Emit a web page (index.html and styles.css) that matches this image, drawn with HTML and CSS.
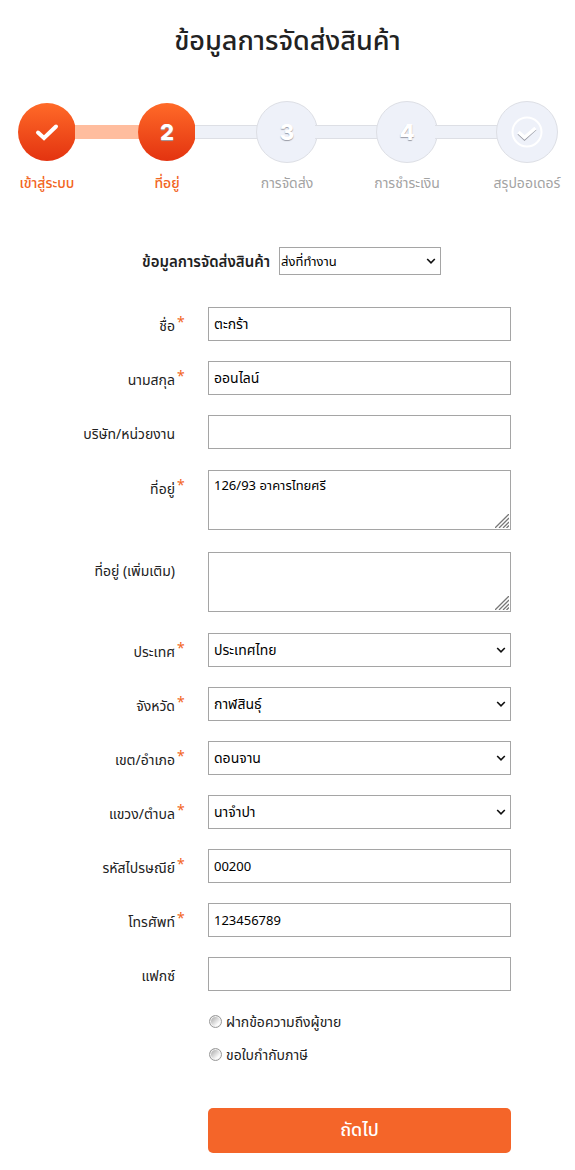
FILE: index.html
```html
<!DOCTYPE html>
<html lang="th">
<head>
<meta charset="utf-8">
<meta name="viewport" content="width=device-width, initial-scale=1">
<title>ข้อมูลการจัดส่งสินค้า</title>
<link rel="stylesheet" href="styles.css">
</head>
<body>
<svg class="sprite" aria-hidden="true">
  <symbol id="chevron" viewBox="0 0 10 8"><path d="M1.200 2 5 5.800 8.800 2" fill="none" stroke="#111" stroke-width="1.600"/></symbol>
  <symbol id="grip" viewBox="0 0 14 14"><path d="M0 14 14 0M4 14 14 4M8 14l6-6M11.500 14l2.500-2.500" fill="none" stroke="#777" stroke-width="1.300"/></symbol>
</svg>
<main class="page">
  <h1 class="title">ข้อมูลการจัดส่งสินค้า</h1>

  <ol class="steps">
    <li class="step step-active">
      <span class="dot"><svg class="tick" viewBox="0 0 24 18" aria-hidden="true"><path d="M3 9.500 9 15 21 3.500" fill="none" stroke="#fff" stroke-width="4" stroke-linecap="round" stroke-linejoin="miter"/></svg></span>
      <span class="step-name">เข้าสู่ระบบ</span>
    </li>
    <li class="bar bar-active" aria-hidden="true"></li>
    <li class="step step-active"><span class="dot">2</span><span class="step-name">ที่อยู่</span></li>
    <li class="bar" aria-hidden="true"></li>
    <li class="step"><span class="dot">3</span><span class="step-name">การจัดส่ง</span></li>
    <li class="bar" aria-hidden="true"></li>
    <li class="step"><span class="dot">4</span><span class="step-name">การชำระเงิน</span></li>
    <li class="bar" aria-hidden="true"></li>
    <li class="step">
      <span class="dot"><svg class="finish" viewBox="0 0 32 32" aria-hidden="true"><circle cx="16" cy="16" r="14.500" fill="none" stroke="#fff" stroke-width="2"/><path d="M7 18 13.500 24 25 13.500" fill="none" stroke="#9a9ca6" stroke-width="1.500"/><path d="M7.500 16 13.500 21.500 24.500 12" fill="none" stroke="#fff" stroke-width="3.500"/></svg></span>
      <span class="step-name">สรุปออเดอร์</span>
    </li>
  </ol>

  <form class="form">
    <div class="preset">
      <label class="preset-label" for="preset">ข้อมูลการจัดส่งสินค้า</label>
      <div class="control preset-control">
        <select class="field field-small" id="preset"><option>ส่งที่ทำงาน</option></select>
        <svg class="chevron"><use href="#chevron"/></svg>
      </div>
    </div>

    <div class="row"><label class="label required" for="first">ชื่อ</label><input class="field" id="first" type="text" value="ตะกร้า"></div>
    <div class="row"><label class="label required" for="last">นามสกุล</label><input class="field" id="last" type="text" value="ออนไลน์"></div>
    <div class="row"><label class="label" for="company">บริษัท/หน่วยงาน</label><input class="field" id="company" type="text"></div>
    <div class="row row-tall"><label class="label required" for="address">ที่อยู่</label>
      <div class="control"><textarea class="field area" id="address">126/93 อาคารไทยศรี</textarea><svg class="grip"><use href="#grip"/></svg></div></div>
    <div class="row row-tall"><label class="label" for="address2">ที่อยู่ (เพิ่มเติม)</label>
      <div class="control"><textarea class="field area" id="address2"></textarea><svg class="grip"><use href="#grip"/></svg></div></div>
    <div class="row"><label class="label required" for="country">ประเทศ</label>
      <div class="control"><select class="field" id="country"><option>ประเทศไทย</option></select><svg class="chevron"><use href="#chevron"/></svg></div></div>
    <div class="row"><label class="label required" for="province">จังหวัด</label>
      <div class="control"><select class="field" id="province"><option>กาฬสินธุ์</option></select><svg class="chevron"><use href="#chevron"/></svg></div></div>
    <div class="row"><label class="label required" for="district">เขต/อำเภอ</label>
      <div class="control"><select class="field" id="district"><option>ดอนจาน</option></select><svg class="chevron"><use href="#chevron"/></svg></div></div>
    <div class="row"><label class="label required" for="subdistrict">แขวง/ตำบล</label>
      <div class="control"><select class="field" id="subdistrict"><option>นาจำปา</option></select><svg class="chevron"><use href="#chevron"/></svg></div></div>
    <div class="row"><label class="label required" for="zip">รหัสไปรษณีย์</label><input class="field field-number" id="zip" type="text" value="00200"></div>
    <div class="row"><label class="label required" for="phone">โทรศัพท์</label><input class="field field-number" id="phone" type="text" value="123456789"></div>
    <div class="row"><label class="label" for="fax">แฟกซ์</label><input class="field field-number" id="fax" type="text"></div>

    <div class="extras">
      <label class="option"><input class="radio" type="radio" name="message">ฝากข้อความถึงผู้ขาย</label>
      <label class="option"><input class="radio" type="radio" name="invoice">ขอใบกำกับภาษี</label>
      <button class="next" type="button">ถัดไป</button>
    </div>
  </form>
</main>
</body>
</html>
```
FILE: styles.css
```css
* { box-sizing: border-box; }
body {
  margin: 0;
  background: #fff;
  color: #222;
  font-family: "Noto Sans Thai", "Noto Sans", sans-serif;
  font-size: 14px;
}
.sprite { display: none; }
.title {
  margin: 0;
  padding-top: 22px;
  font-size: 27px;
  line-height: 40px;
  font-weight: 500;
  text-align: center;
}
.steps {
  display: flex;
  margin: 0;
  padding: 39px 18px 0 17px;
  list-style: none;
}
.step {
  display: flex;
  flex-direction: column;
  align-items: center;
  width: 60px;
  color: #a3a3a3;
}
.dot {
  display: flex;
  align-items: center;
  justify-content: center;
  width: 62px;
  height: 62px;
  flex: none;
  border: 1px solid #dddfe5;
  border-radius: 50%;
  background: #eef1f9;
  color: #fff;
  font: 800 22px/24px Inter, sans-serif;
  text-shadow: 0 1px 1px #9a9ca6;
}
.step-active { color: #f26522; font-weight: 500; }
.step-active .dot {
  width: 58px;
  height: 58px;
  margin: 2px 0;
  border: 0;
  background: linear-gradient(#ff6a28, #e33310);
}
.tick { width: 24px; height: 18px; }
.finish { width: 32px; height: 32px; }
.step-name {
  margin-top: 10px;
  line-height: 22px;
  white-space: nowrap;
}
.bar {
  flex: 1;
  height: 14px;
  margin: 24px -2px 0;
  border: solid #dddfe5;
  border-width: 1px 0;
  background: #eef1f8;
}
.bar-active { border-color: #ffbd9e; background: #ffbd9e; }

.form {
  display: flex;
  flex-direction: column;
  gap: 20px;
  padding: 52px 64px 0 0;
}
.preset {
  display: flex;
  align-items: center;
  gap: 9px;
  margin-bottom: 12px;
  padding-left: 142px;
}
.preset-label { padding-top: 2px; font-size: 15px; font-weight: 600; white-space: nowrap; }
.preset-control { width: 162px; }
.row {
  display: grid;
  grid-template-columns: 175px 1fr;
  column-gap: 33px;
}
.row-tall { margin: 1px 0; }
.label {
  position: relative;
  padding-top: 9px;
  line-height: 22px;
  text-align: right;
}
.required::after {
  content: "*";
  position: absolute;
  left: 100%;
  top: 5px;
  padding-left: 2px;
  color: #f26522;
  font-size: 14px;
}
.control { position: relative; }
.field {
  display: block;
  width: 100%;
  height: 34px;
  margin: 0;
  padding: 0 5px;
  border: 1px solid #a5a5a5;
  border-radius: 0;
  background: #fff;
  color: #000;
  font: 14px/18px "Noto Sans", "Noto Sans Thai", sans-serif;
  appearance: none;
}
.field-small { height: 28px; padding: 0 1px; }
.field-small, .field-number, .area { font-size: 13px; }
.area { height: 60px; padding: 5px; resize: none; }
.chevron {
  position: absolute;
  right: 5px;
  top: calc(50% - 4px);
  width: 10px;
  height: 8px;
  pointer-events: none;
}
.grip {
  position: absolute;
  right: 2px;
  bottom: 2px;
  width: 14px;
  height: 14px;
  pointer-events: none;
}
.extras {
  display: flex;
  flex-direction: column;
  gap: 11px;
  padding: 1px 0 0 208px;
}
.option {
  display: flex;
  align-items: center;
  gap: 4px;
  line-height: 22px;
}
.radio {
  width: 13px;
  height: 13px;
  margin: 0 0 4px 1px;
  border: 1px solid #999;
  border-radius: 50%;
  background: linear-gradient(135deg, #b0b0b0 15%, #fff 75%);
  box-shadow: inset 0 0 0 1px #f2f2f2;
  appearance: none;
}
.next {
  height: 45px;
  margin-top: 30px;
  border: 0;
  border-radius: 5px;
  background: #f46529;
  color: #fff;
  font: 500 18px/24px "Noto Sans Thai", "Noto Sans", sans-serif;
}
```
